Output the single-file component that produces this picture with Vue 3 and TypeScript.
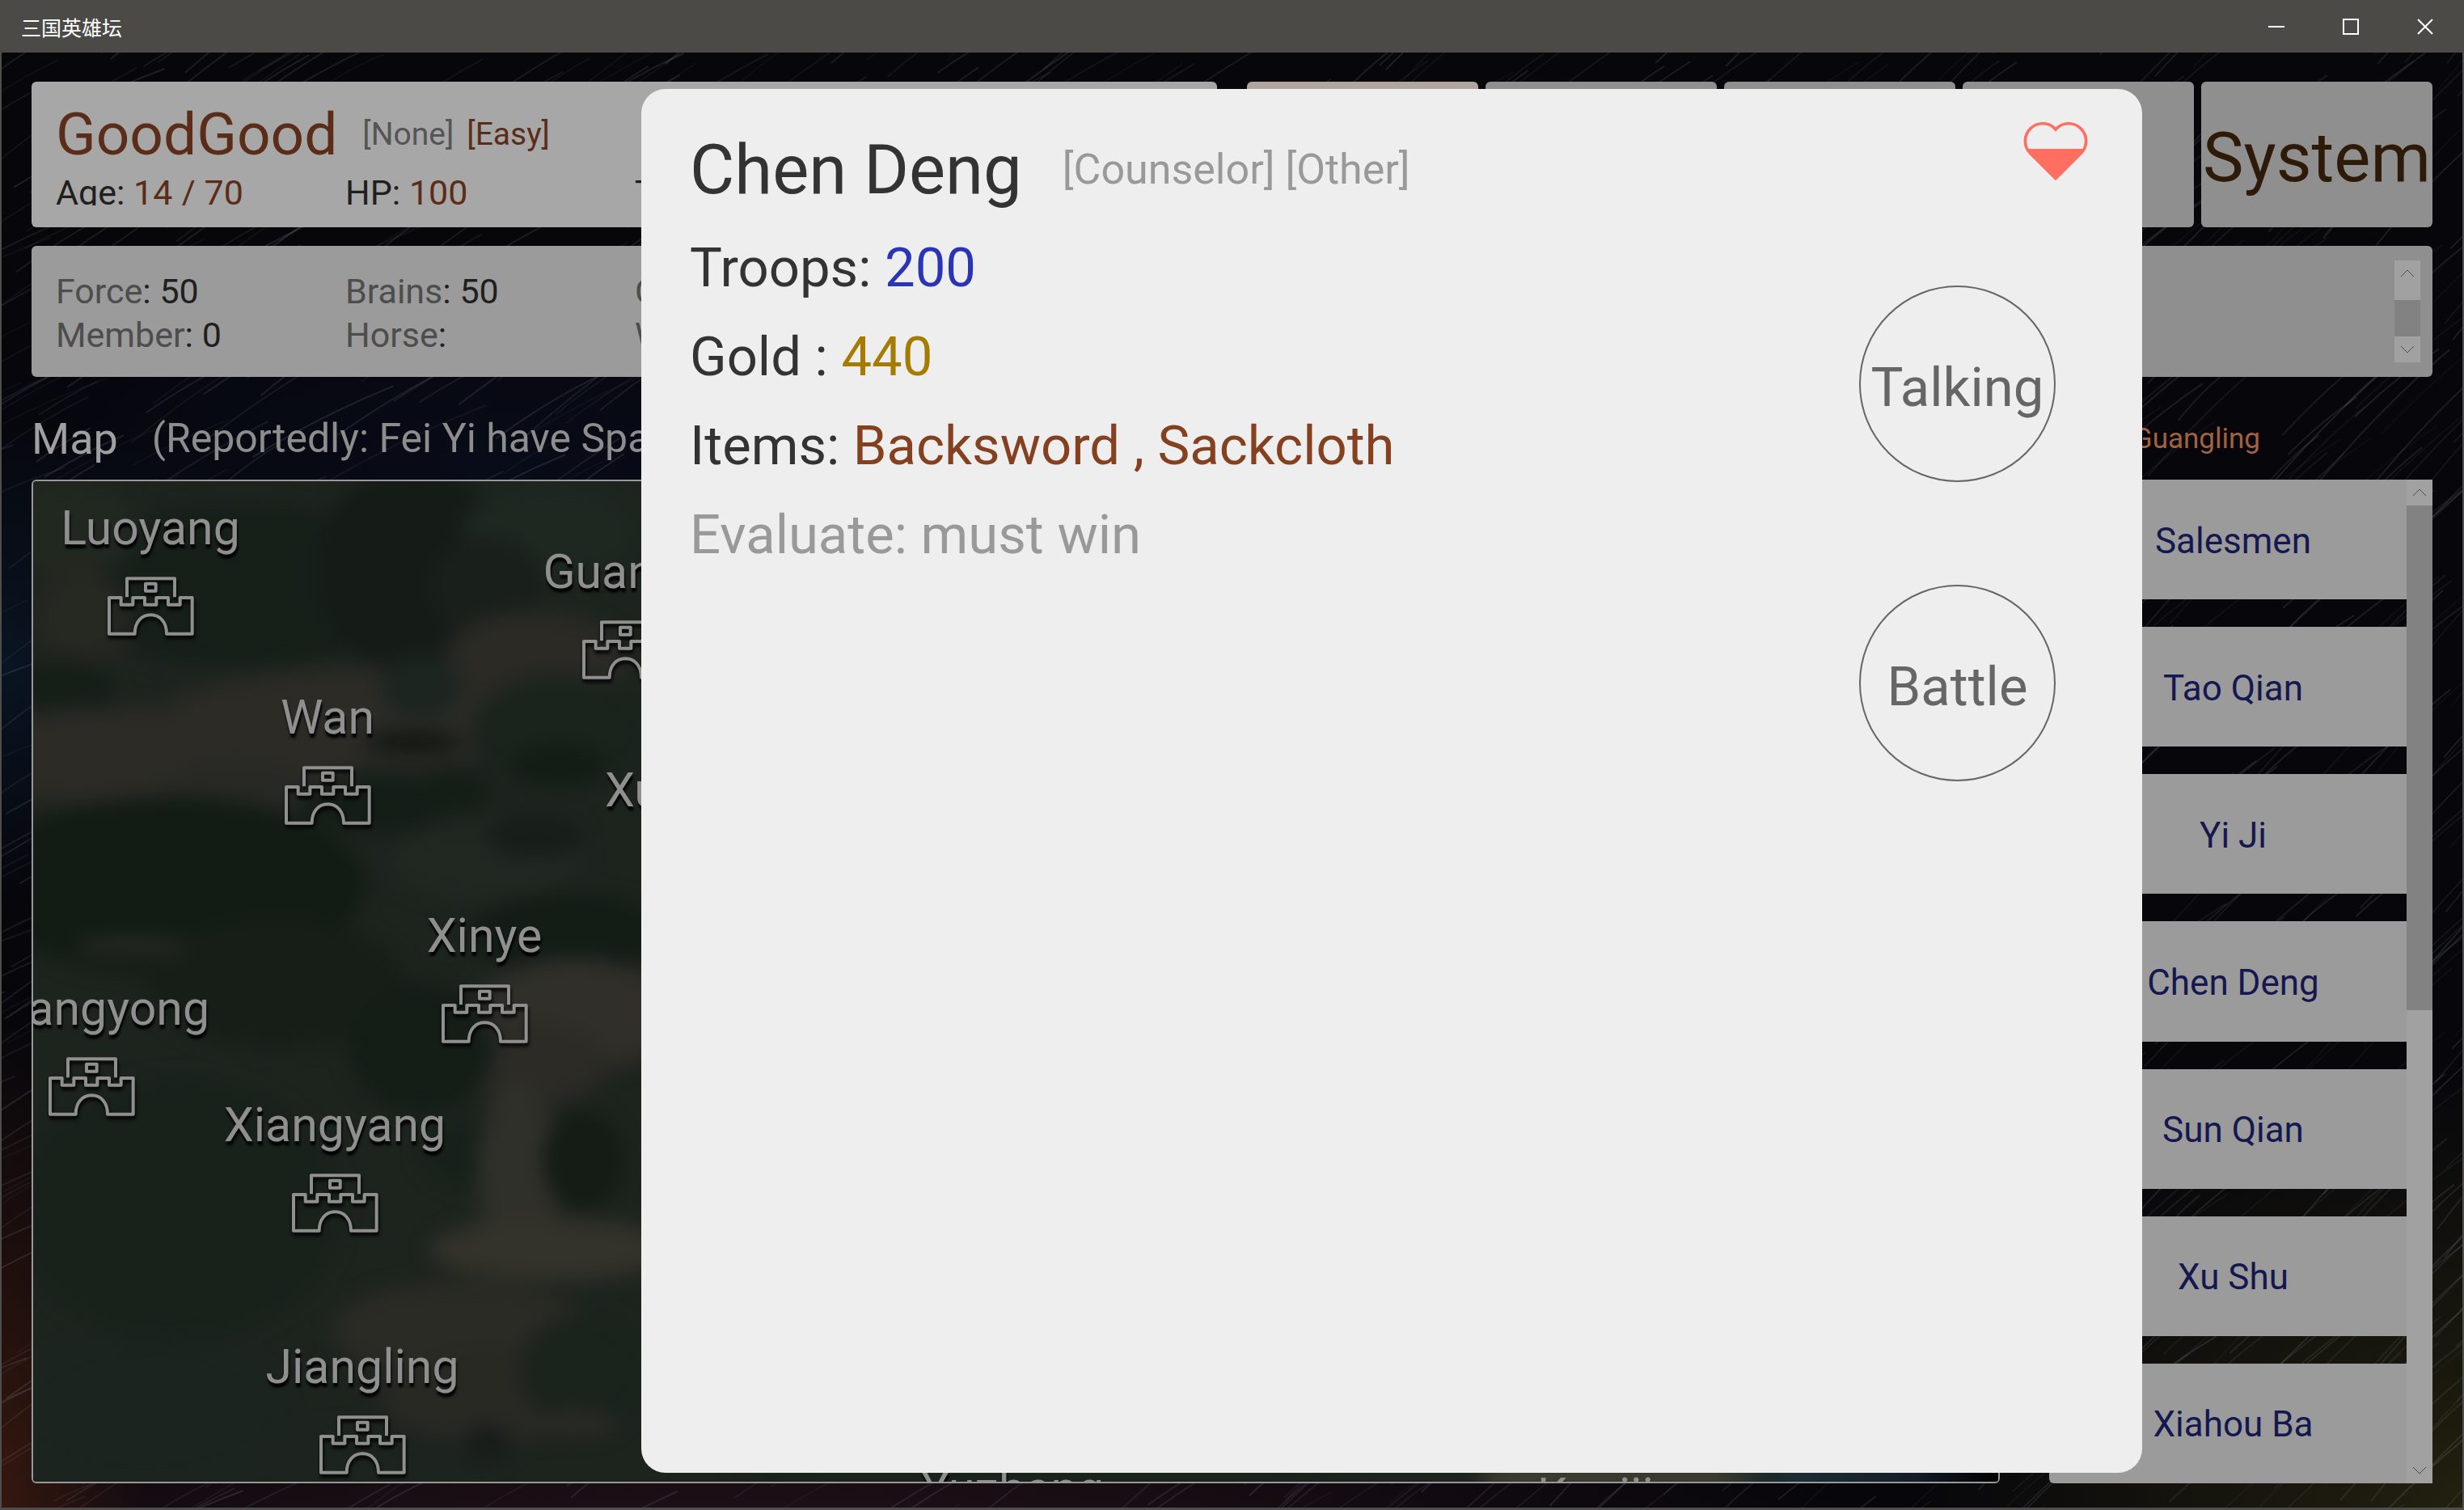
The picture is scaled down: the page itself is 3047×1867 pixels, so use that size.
<script setup lang="ts">
interface City {
  name: string
  x: number
  y: number
}

interface Blob {
  cx: number
  cy: number
  rx: number
  ry: number
  fill: string
}

interface Stat {
  label: string
  value: string
}

const summary: Stat[] = [
  { label: 'Age:', value: '14 / 70' },
  { label: 'HP:', value: '100' },
  { label: 'Troops:', value: '' },
]

const attributes: Stat[] = [
  { label: 'Force', value: '50' },
  { label: 'Brains', value: '50' },
  { label: 'Charm', value: '' },
  { label: 'Member', value: '0' },
  { label: 'Horse', value: '' },
  { label: 'Weapon', value: '' },
]

const menu: string[] = ['', '', '', '', 'System']

const people: string[] = ['Salesmen', 'Tao Qian', 'Yi Ji', 'Chen Deng', 'Sun Qian', 'Xu Shu', 'Xiahou Ba']

// x is the centre of the pin, y the top of its castle, both inside the map
const cities: City[] = [
  { name: 'Luoyang', x: 145, y: 118 },
  { name: 'Guandu', x: 732, y: 172 },
  { name: 'Wan', x: 364, y: 352 },
  { name: 'Xuchang', x: 822, y: 442 },
  { name: 'Xinye', x: 558, y: 622 },
  { name: 'Shangyong', x: 72, y: 712 },
  { name: 'Xiangyang', x: 373, y: 856 },
  { name: 'Jiangling', x: 407, y: 1155 },
  { name: 'Yuzhang', x: 1211, y: 1306 },
  { name: 'Kuaiji', x: 1932, y: 1314 },
]

const terrain: Blob[] = [
  { cx: 260, cy: 130, rx: 210, ry: 100, fill: '#171f19' },
  { cx: 40, cy: 60, rx: 90, ry: 60, fill: '#212820' },
  { cx: 60, cy: 170, rx: 60, ry: 60, fill: '#262822' },
  { cx: 40, cy: 260, rx: 60, ry: 40, fill: '#161e18' },
  { cx: 470, cy: 110, rx: 120, ry: 130, fill: '#151c17' },
  { cx: 640, cy: 60, rx: 110, ry: 60, fill: '#1f2721' },
  { cx: 560, cy: 130, rx: 70, ry: 60, fill: '#191f1a' },
  { cx: 420, cy: 290, rx: 260, ry: 60, fill: '#2c2b26' },
  { cx: 620, cy: 220, rx: 110, ry: 60, fill: '#2b2a25' },
  { cx: 130, cy: 340, rx: 280, ry: 60, fill: '#2c2b26' },
  { cx: 250, cy: 385, rx: 90, ry: 36, fill: '#272924' },
  { cx: 480, cy: 255, rx: 50, ry: 40, fill: '#1d2520' },
  { cx: 650, cy: 310, rx: 110, ry: 70, fill: '#1b231d' },
  { cx: 470, cy: 322, rx: 62, ry: 12, fill: '#10150f' },
  { cx: 650, cy: 350, rx: 60, ry: 26, fill: '#141c16' },
  { cx: 520, cy: 385, rx: 44, ry: 26, fill: '#151d17' },
  { cx: 170, cy: 500, rx: 240, ry: 110, fill: '#121b14' },
  { cx: 420, cy: 400, rx: 90, ry: 34, fill: '#151d17' },
  { cx: 560, cy: 470, rx: 120, ry: 50, fill: '#212721' },
  { cx: 620, cy: 440, rx: 60, ry: 24, fill: '#171e19' },
  { cx: 300, cy: 620, rx: 160, ry: 80, fill: '#171e18' },
  { cx: 120, cy: 575, rx: 70, ry: 14, fill: '#242722' },
  { cx: 660, cy: 560, rx: 120, ry: 50, fill: '#141c16' },
  { cx: 670, cy: 660, rx: 130, ry: 70, fill: '#302f29' },
  { cx: 620, cy: 720, rx: 90, ry: 50, fill: '#2c2b26' },
  { cx: 480, cy: 700, rx: 90, ry: 80, fill: '#151d17' },
  { cx: 540, cy: 830, rx: 60, ry: 40, fill: '#17211a' },
  { cx: 600, cy: 860, rx: 50, ry: 120, fill: '#30302a' },
  { cx: 680, cy: 840, rx: 50, ry: 60, fill: '#141c15' },
  { cx: 640, cy: 950, rx: 150, ry: 40, fill: '#33322b' },
  { cx: 530, cy: 1050, rx: 160, ry: 60, fill: '#2b2b25' },
  { cx: 560, cy: 1130, rx: 130, ry: 60, fill: '#292924' },
  { cx: 680, cy: 1100, rx: 80, ry: 70, fill: '#1b231d' },
  { cx: 560, cy: 1190, rx: 30, ry: 24, fill: '#181d19' },
  { cx: 670, cy: 1165, rx: 50, ry: 14, fill: '#2c2c27' },
  { cx: 180, cy: 900, rx: 200, ry: 160, fill: '#19211b' },
  { cx: 140, cy: 1150, rx: 170, ry: 90, fill: '#1b241e' },
  { cx: 420, cy: 1200, rx: 120, ry: 30, fill: '#1d241f' },
  { cx: 1250, cy: 1236, rx: 380, ry: 50, fill: '#1a231c' },
  { cx: 1960, cy: 1240, rx: 170, ry: 60, fill: '#3a3a2f' },
]

// Long exposure star trails, seeded so that every load draws the same sky
const trails: { d: string; o: number }[] = []
let seed = 17
const next = (): number => {
  seed = (seed * 16807) % 2147483647
  return seed / 2147483647
}
for (let i = 0; i < 1500; i++) {
  const x = next() * 3200 - 150
  const y = next() * 1900
  const len = 50 + next() * 160
  const slope = 0.4 + next() * 0.3 + (x / 3047) * 0.4
  const dx = Math.round(len)
  const dy = Math.round(len * slope)
  trails.push({
    d: `M${Math.round(x)} ${Math.round(y)}q${Math.round(dx / 2)} ${-Math.round(dy * 0.6)} ${dx} ${-dy}`,
    o: Math.round(5 + next() * 11) / 100,
  })
}
</script>

<template>
  <div class="window">
    <header class="titlebar">
      <h1 class="caption">三国英雄坛</h1>
      <div class="window-buttons">
        <button type="button" aria-label="Minimize">
          <svg width="20" height="20" viewBox="0 0 20 20"><path d="M0 10H20" /></svg>
        </button>
        <button type="button" aria-label="Maximize">
          <svg width="20" height="20" viewBox="0 0 20 20"><path d="M1 1H19V19H1Z" /></svg>
        </button>
        <button type="button" aria-label="Close">
          <svg width="20" height="20" viewBox="0 0 20 20"><path d="M1 1L19 19M19 1L1 19" /></svg>
        </button>
      </div>
    </header>

    <main class="stage">
      <svg class="sky" viewBox="0 0 3047 1802" preserveAspectRatio="none" aria-hidden="true">
        <path v-for="(t, i) in trails" :key="i" :d="t.d" :stroke-opacity="t.o" />
      </svg>

      <div class="row">
        <section class="panel profile">
          <div class="profile-clip">
            <div class="profile-name">
              <strong>GoodGood</strong>
              <span>[None]</span>
              <em>[Easy]</em>
            </div>
            <div class="stats">
              <span v-for="s in summary" :key="s.label">{{ s.label }} <b>{{ s.value }}</b></span>
            </div>
          </div>
        </section>
        <nav class="menu">
          <button v-for="(m, i) in menu" :key="i" type="button" :class="{ active: i === 0 }">{{ m }}</button>
        </nav>
      </div>

      <div class="row">
        <section class="panel attributes">
          <div class="stats">
            <span v-for="s in attributes" :key="s.label"><i>{{ s.label }}</i>: {{ s.value }}</span>
          </div>
        </section>
        <section class="panel log">
          <div class="scrollbar">
            <svg class="arrow" viewBox="0 0 32 32"><path d="M8 20L16 12L24 20" /></svg>
            <div class="thumb"></div>
            <svg class="arrow" viewBox="0 0 32 32"><path d="M8 12L16 20L24 12" /></svg>
          </div>
        </section>
      </div>

      <div class="headings">
        <h2>Map</h2>
        <p>(Reportedly: Fei Yi have Spa</p>
        <p class="place">Guangling</p>
      </div>

      <div class="world">
        <section class="map">
          <svg class="terrain" width="2430" height="1237" viewBox="0 0 2430 1237" aria-hidden="true">
            <defs>
              <filter id="soft" x="-20%" y="-20%" width="140%" height="140%" color-interpolation-filters="sRGB">
                <feGaussianBlur stdDeviation="12" />
              </filter>
              <linearGradient id="sea" x1="0" x2="1">
                <stop offset="0" stop-color="#1b2d33" stop-opacity="0" />
                <stop offset="0.3" stop-color="#1b2d33" />
                <stop offset="0.7" stop-color="#151c2a" />
                <stop offset="1" stop-color="#000" />
              </linearGradient>
            </defs>
            <rect width="2430" height="1237" fill="#1d241e" />
            <g filter="url(#soft)">
              <ellipse
                v-for="(b, i) in terrain"
                :key="i"
                :cx="b.cx"
                :cy="b.cy"
                :rx="b.rx"
                :ry="b.ry"
                :fill="b.fill"
              />
            </g>
            <rect x="2080" width="350" height="1237" fill="url(#sea)" />
          </svg>
          <a
            v-for="c in cities"
            :key="c.name"
            class="city"
            href="#"
            :style="{ left: c.x + 'px', top: c.y + 'px' }"
          >
            <span>{{ c.name }}</span>
            <svg width="107" height="73" viewBox="0 0 321 219" aria-hidden="true">
              <path
                d="M72 76V7H249V76M141 26H179V53H141ZM6 78H50V104H94V78H138V104H181V78H225V104H269V78H314V212H219C219 168 194 142 160 142C126 142 101 168 101 212H6Z"
              />
            </svg>
          </a>
        </section>

        <section class="people">
          <div class="people-list">
            <button v-for="p in people" :key="p" type="button">{{ p }}</button>
          </div>
          <div class="scrollbar tall">
            <svg class="arrow" viewBox="0 0 32 32"><path d="M8 20L16 12L24 20" /></svg>
            <div class="thumb"></div>
            <svg class="arrow" viewBox="0 0 32 32"><path d="M8 12L16 20L24 12" /></svg>
          </div>
        </section>
      </div>

      <div class="overlay">
        <article class="dialog" role="dialog" aria-labelledby="who">
          <div class="details">
            <div class="who">
              <h2 id="who">Chen Deng</h2>
              <span>[Counselor] [Other]</span>
            </div>
            <p>Troops: <b class="troops">200</b></p>
            <p>Gold : <b class="gold">440</b></p>
            <p>Items: <b class="items">Backsword , Sackcloth</b></p>
            <p class="evaluate">Evaluate: must win</p>
          </div>
          <div class="side">
            <svg class="heart" width="80" height="74" viewBox="0 0 240 222" aria-hidden="true">
              <path class="fill" d="M14 102H226L215 118L120 216L25 118Z" />
              <path
                class="line"
                d="M120 30A64.5 64.5 0 1 0 24.4 116.6L120 212L215.6 116.6A64.5 64.5 0 1 0 120 30Z"
              />
            </svg>
            <div class="actions">
              <button type="button">Talking</button>
              <button type="button">Battle</button>
            </div>
          </div>
        </article>
      </div>
    </main>
  </div>
</template>

<style>
body {
  margin: 0;
  background: #05060a;
}
</style>

<style scoped>
.window,
.window * {
  box-sizing: border-box;
}

.window {
  display: flex;
  flex-direction: column;
  height: 100vh;
  overflow: hidden;
  font-family: Roboto, 'Noto Sans CJK SC', sans-serif;
  color: #1f1f1f;
}

h1,
h2,
p {
  margin: 0;
  font-weight: 400;
}

b,
strong,
i,
em {
  font-weight: 400;
  font-style: normal;
}

button {
  margin: 0;
  border: 0;
  padding: 0;
  background: none;
  font-family: inherit;
  color: inherit;
}

.titlebar {
  display: flex;
  flex: none;
  align-items: center;
  justify-content: space-between;
  height: 65px;
  padding: 0 2px 0 26px;
  background: #4b4a47;
  color: #fff;
}

.caption {
  font-family: 'Noto Sans CJK SC', sans-serif;
  font-size: 25px;
  line-height: 32px;
}

.window-buttons {
  display: flex;
}

.window-buttons button {
  display: flex;
  align-items: center;
  justify-content: center;
  width: 92px;
  height: 65px;
}

.window-buttons path {
  fill: none;
  stroke: #fff;
  stroke-width: 2;
}

.stage {
  position: relative;
  display: flex;
  flex: 1;
  flex-direction: column;
  min-height: 0;
  border: solid #4f4e4d;
  border-width: 0 2px 3px;
  padding: 36px 37px 30px;
  background:
    radial-gradient(ellipse 180px 620px at 0% 100%, #35180f 0%, transparent 100%),
    radial-gradient(ellipse 1500px 260px at 30% 104%, #26131a 0%, transparent 100%),
    radial-gradient(ellipse 700px 560px at 100% 100%, #22200f 0%, transparent 100%),
    radial-gradient(ellipse 500px 300px at 0% 42%, #0a1422 0%, transparent 100%),
    radial-gradient(ellipse 700px 260px at 20% 28%, #080c18 0%, transparent 100%),
    #06060b;
}

.sky {
  position: absolute;
  inset: 0;
  width: 100%;
  height: 100%;
}

.sky path {
  fill: none;
  stroke: #9aa0b8;
  stroke-width: 2;
}

.row {
  position: relative;
  display: grid;
  grid-template-columns: 1fr 1fr;
  gap: 37px;
  margin-bottom: 23px;
}

.row + .row {
  margin-bottom: 0;
}

.panel {
  border-radius: 6px;
}

.profile {
  height: 180px;
  padding: 20px 4px 27px 30px;
  background: #a7a7a7;
}

.profile-clip {
  height: 100%;
  overflow: hidden;
}

.profile-name {
  display: flex;
  align-items: center;
  height: 90px;
  font-size: 39px;
}

.profile-name strong {
  margin-right: 31px;
  font-size: 73px;
  color: #5b2c17;
}

.profile-name span {
  margin-right: 16px;
  color: #555;
}

.profile-name em {
  color: #5b2c17;
}

.stats {
  display: grid;
  grid-template-columns: repeat(3, 25%);
  font-size: 43px;
  line-height: 54px;
  white-space: nowrap;
}

.profile .stats b {
  color: #5b2c17;
}

.attributes {
  height: 162px;
  padding: 29px 4px 0 30px;
  background: #9b9b9b;
}

.attributes i {
  color: #4d4d4d;
}

.menu {
  display: flex;
  gap: 9px;
}

.menu button {
  flex: 1;
  min-width: 0;
  border-radius: 6px;
  padding-top: 8px;
  background: #8f8f8f;
  font-size: 85px;
  color: #2e1a08;
}

.menu .active {
  background: #b0a5a1;
}

.log {
  display: flex;
  justify-content: flex-end;
  height: 162px;
  padding: 18px 15px;
  background: #8f8f8f;
}

.scrollbar {
  display: flex;
  flex: none;
  flex-direction: column;
  width: 32px;
  background: #a1a1a1;
}

.arrow {
  display: block;
  flex: none;
  width: 32px;
  height: 32px;
}

.arrow path {
  fill: none;
  stroke: #4c4c4c;
  stroke-width: 1;
}

.thumb {
  flex: 1;
  margin-top: 17px;
  background: #828282;
}

.tall .thumb {
  flex: none;
  height: 624px;
  margin: 0 0 auto;
}

.headings {
  position: relative;
  display: flex;
  align-items: center;
  height: 127px;
  padding-top: 25px;
  font-size: 50px;
  color: #8d8d8d;
  white-space: nowrap;
}

.headings h2 {
  margin-right: 42px;
  font-size: 54px;
  color: #a0a0a0;
}

.headings .place {
  margin: 0 213px 0 auto;
  font-size: 35px;
  color: #a2623f;
}

.world {
  position: relative;
  display: flex;
  flex: 1;
  gap: 61px;
  min-height: 0;
}

.map {
  position: relative;
  flex: 1;
  min-width: 0;
  overflow: hidden;
  border: 2px solid #999;
  border-radius: 6px;
  background: #1d241e;
}

.terrain {
  display: block;
}

.city {
  position: absolute;
  display: flex;
  flex-direction: column;
  align-items: center;
  width: 400px;
  margin: -100px 0 0 -200px;
  font-size: 59px;
  line-height: 80px;
  color: #8f8f8f;
  text-decoration: none;
  text-shadow: 1px 5px 3px #000;
}

.city span {
  height: 100px;
}

.city svg {
  overflow: visible;
  filter: drop-shadow(1px 4px 2px #000);
}

.city path {
  fill: none;
  stroke: #8f8f8f;
  stroke-width: 12;
  stroke-linejoin: round;
}

.people {
  display: flex;
  flex: none;
  width: 474px;
}

.people-list {
  display: flex;
  flex: 1;
  flex-direction: column;
  gap: 34px;
}

.people-list button {
  flex: 1;
  border-radius: 6px 0 0 6px;
  padding: 3px 0 0 13px;
  background: #9b9b9b;
  font-size: 44px;
  color: #15174f;
}

.overlay {
  position: absolute;
  inset: 0;
  display: flex;
  padding: 45px 396px 43px 791px;
}

.dialog {
  display: flex;
  flex: 1;
  justify-content: space-between;
  border-radius: 30px;
  padding: 33px 67px 0 60px;
  background: #eee;
  color: #333;
}

.details p {
  font-size: 67px;
  line-height: 110px;
}

.details .troops {
  color: #2a35b5;
}

.details .gold {
  color: #a67c00;
}

.details .items {
  color: #854020;
}

.details .evaluate {
  color: #999;
}

.who {
  display: flex;
  align-items: center;
  height: 133px;
  font-size: 52px;
  color: #999;
}

.who h2 {
  margin-right: 50px;
  font-size: 85px;
  color: #333;
}

.side {
  display: flex;
  flex-direction: column;
  align-items: flex-end;
  padding-top: 7px;
}

.heart .fill {
  fill: #ff6f61;
}

.heart .line {
  fill: none;
  stroke: #ff6f61;
  stroke-width: 11;
}

.actions {
  display: flex;
  flex-direction: column;
  gap: 127px;
  margin: 129px 40px 0 0;
}

.actions button {
  width: 243px;
  height: 243px;
  border: 2px solid #666;
  border-radius: 50%;
  padding-top: 8px;
  font-size: 67px;
  color: #666;
}
</style>
